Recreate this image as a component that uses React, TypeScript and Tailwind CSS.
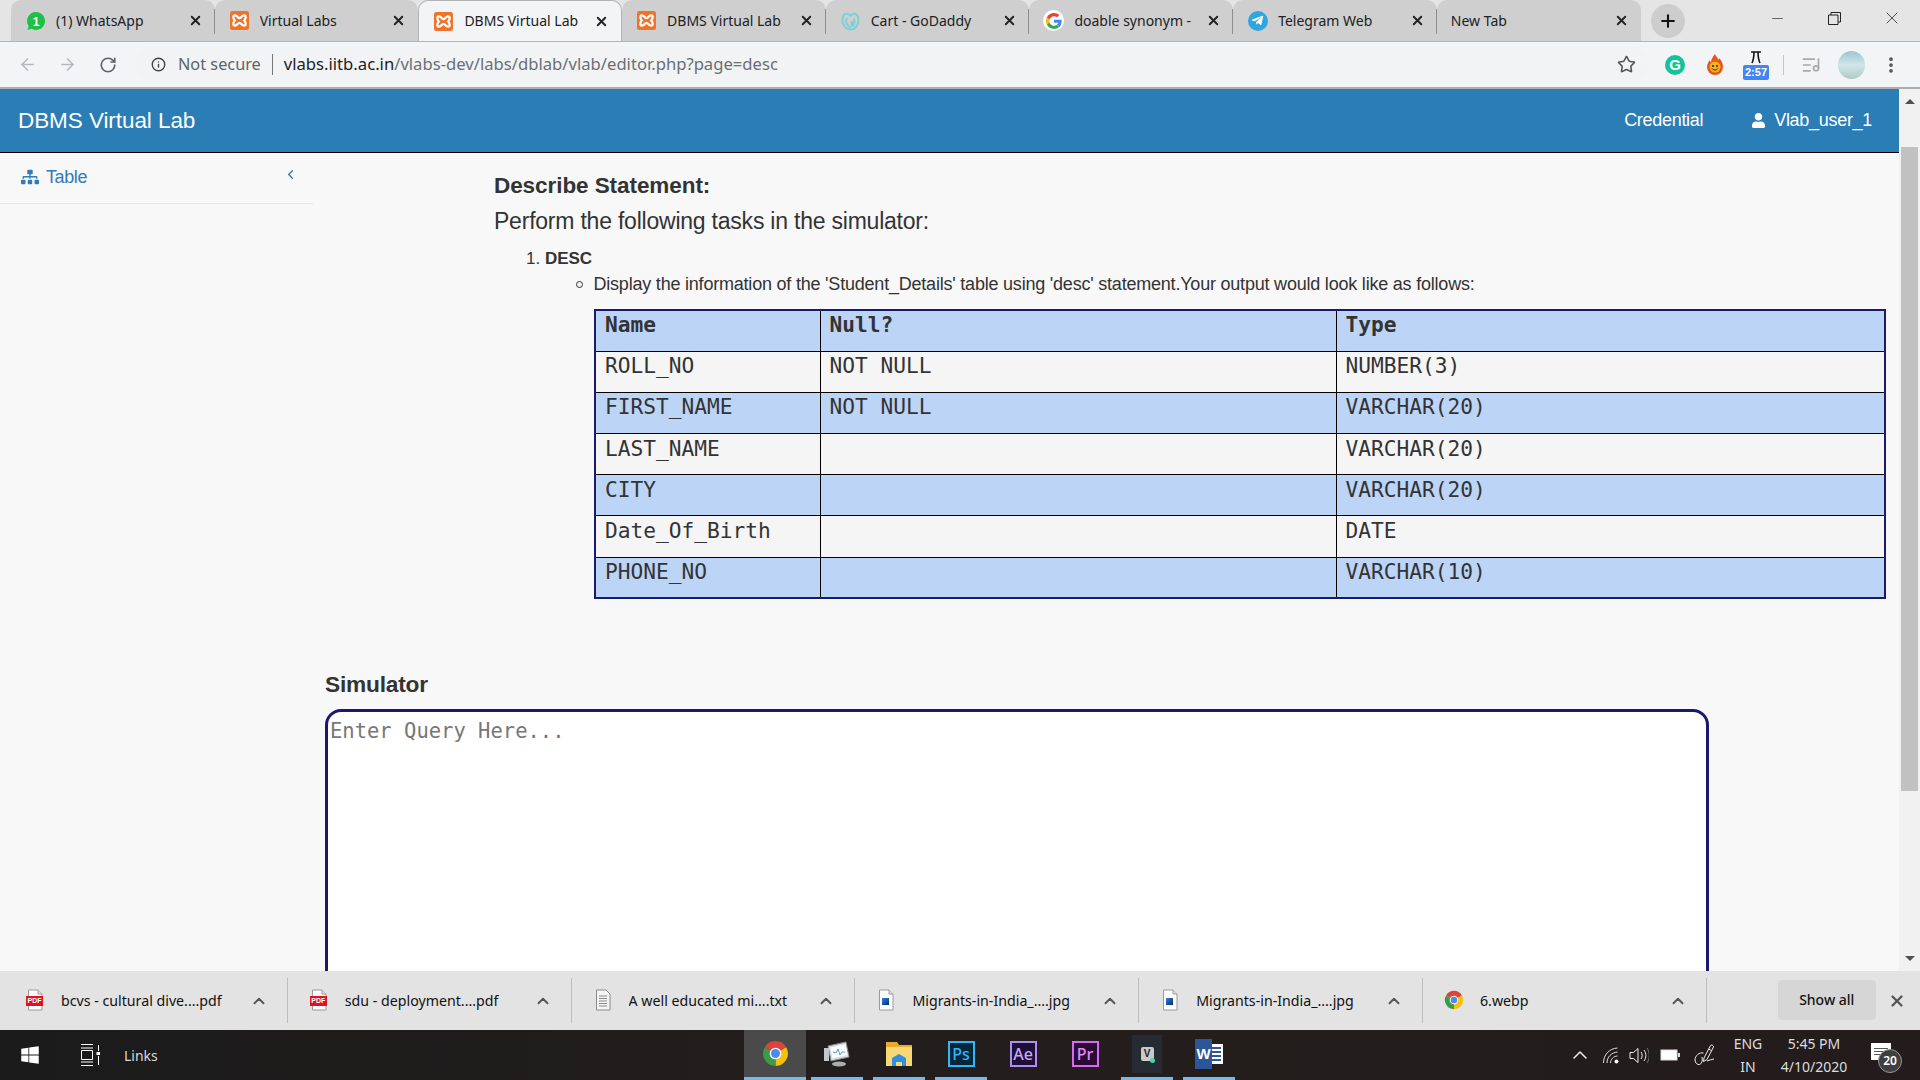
import React from "react";
import { ArrowLeft, ArrowRight, RotateCw, Star, X, Plus, ChevronUp, ChevronLeft, Minus, MoreVertical, Info, ListMusic } from "lucide-react";
import { FaSitemap, FaUser, FaTelegramPlane, FaWindows } from "react-icons/fa";

const Xampp = () => (
  <svg width="19" height="19" viewBox="0 0 20 20">
    <rect width="20" height="20" rx="2.5" fill="#f0732a" />
    <path d="M5 4.5c3 0 3 3 5 3s2-3 5-3c2 0 2 3.5 0 5.500 2 2 2 5.500 0 5.500-3 0-3-3-5-3s-2 3-5 3c-2 0-2-3.500 0-5.500-2-2-2-5.500 0-5.500z" fill="none" stroke="#fff" strokeWidth="2.400" />
  </svg>
);
const WhatsApp = () => (
  <svg width="20" height="20" viewBox="0 0 20 20">
    <path d="M10 1a9 9 0 1 1-4.500 16.800L1.500 19l1.200-3.900A9 9 0 0 1 10 1z" fill="#1fc04a" />
    <text x="10" y="14.500" textAnchor="middle" fontSize="12" fontWeight="700" fill="#fff" fontFamily="Liberation Sans, sans-serif">1</text>
  </svg>
);
const GoDaddy = () => (
  <svg width="21" height="20" viewBox="0 0 21 20" fill="none" stroke="#7fd0d6" strokeWidth="2">
    <path d="M10.500 18.500C5 18.500 2 13 2.500 7.500 3 3 7 1 10.500 4.500 14 1 18 3 18.500 7.500 19 13 16 18.500 10.500 18.500z" />
    <path d="M7 7c-2 4 0 8 3.500 9.500M14 7.500c1 3 .5 5.500-1.500 7.500-1-1-1-3 0-5" />
  </svg>
);
const GoogleG = () => (
  <span className="flex h-[21px] w-[21px] items-center justify-center rounded-full bg-white">
    <svg width="16" height="16" viewBox="0 0 48 48">
      <path fill="#EA4335" d="M24 9.5c3.54 0 6.71 1.22 9.21 3.6l6.85-6.85C35.9 2.38 30.47 0 24 0 14.62 0 6.51 5.38 2.56 13.22l7.98 6.19C12.43 13.72 17.74 9.5 24 9.5z" />
      <path fill="#4285F4" d="M46.98 24.55c0-1.57-.15-3.09-.38-4.55H24v9.02h12.94c-.58 2.96-2.26 5.48-4.78 7.18l7.73 6c4.51-4.18 7.09-10.36 7.09-17.65z" />
      <path fill="#FBBC05" d="M10.53 28.59c-.48-1.45-.76-2.99-.76-4.59s.27-3.14.76-4.59l-7.98-6.19C.92 16.46 0 20.12 0 24c0 3.88.92 7.54 2.56 10.78l7.97-6.19z" />
      <path fill="#34A853" d="M24 48c6.48 0 11.93-2.13 15.89-5.81l-7.73-6c-2.15 1.45-4.92 2.3-8.16 2.3-6.26 0-11.57-4.22-13.47-9.91l-7.98 6.19C6.51 42.62 14.62 48 24 48z" />
    </svg>
  </span>
);
const Telegram = () => (
  <span className="flex h-[20px] w-[20px] items-center justify-center rounded-full bg-[#2ea6df] text-white">
    <FaTelegramPlane size={13} />
  </span>
);
const Chrome = ({ size }: { size: number }) => (
  <svg width={size} height={size} viewBox="0 0 24 24">
    <path d="M12 12L2.470 6.500A11 11 0 0 1 21.530 6.500z" fill="#db4437" />
    <path d="M12 12L21.530 6.500A11 11 0 0 1 12 23z" fill="#f4c20d" />
    <path d="M12 12L12 23A11 11 0 0 1 2.470 6.500z" fill="#3d9a4a" />
    <circle cx="12" cy="12" r="5.200" fill="#fff" />
    <circle cx="12" cy="12" r="4" fill="#4a8af4" />
  </svg>
);
const FileBase = ({ children }: { children?: React.ReactNode }) => (
  <span className="relative block h-[22px] w-[16px]">
    <svg width="16" height="22" viewBox="0 0 16 22">
      <path d="M1.500 1h9.500l4 4v16h-13.500z" fill="#fdfdfd" stroke="#9a9a9a" />
      <path d="M11 1v4h4" fill="#e5e5e5" stroke="#9a9a9a" />
    </svg>
    {children}
  </span>
);
const PdfIcon = () => (
  <FileBase>
    <span className="absolute left-[-1px] top-[7px] flex h-[10px] w-[17px] items-center justify-center bg-[#e3101f] font-['Liberation_Sans',sans-serif] text-[7px] font-bold leading-none text-white">PDF</span>
  </FileBase>
);
const TxtIcon = () => (
  <svg width="16" height="22" viewBox="0 0 16 22">
    <path d="M1.500 1h9.500l4 4v16h-13.500z" fill="#f4f4f4" stroke="#8b8b8b" />
    <path d="M4 7h8M4 9.500h8M4 12h8M4 14.500h8M4 17h8" stroke="#8b8b8b" />
  </svg>
);
const JpgIcon = () => (
  <FileBase>
    <span className="absolute left-[4px] top-[9px] block h-[7px] w-[7px] bg-gradient-to-br from-[#2f84dc] to-[#0b2d6c]" />
  </FileBase>
);

const tabs: { title: string; icon?: React.ReactNode; active?: boolean }[] = [
  { title: "(1) WhatsApp", icon: <WhatsApp /> },
  { title: "Virtual Labs", icon: <Xampp /> },
  { title: "DBMS Virtual Lab", icon: <Xampp />, active: true },
  { title: "DBMS Virtual Lab", icon: <Xampp /> },
  { title: "Cart - GoDaddy", icon: <GoDaddy /> },
  { title: "doable synonym -", icon: <GoogleG /> },
  { title: "Telegram Web", icon: <Telegram /> },
  { title: "New Tab" },
];

function TabStrip() {
  return (
    <div className="flex h-[42px] shrink-0 border-b border-[#b4b4b4] bg-[#e5e5e5] pl-[11px] font-['Noto_Sans',sans-serif] text-[14px] text-[#202124]">
      {tabs.map((t, i) => (
        <div
          key={i}
          className={`relative flex h-[41px] w-[203.7px] shrink-0 items-center rounded-t-[10px] pl-[14px] pr-[12px] ${t.active ? "border border-b-0 border-[#b4b4b4] bg-[#f3f4f6]" : "bg-[#cfcfcf]"}`}
        >
          {t.icon && <span className="mr-[10px] flex w-[21px] shrink-0 items-center justify-center">{t.icon}</span>}
          <span className="flex-1 truncate pb-[1px]">{t.title}</span>
          <X size={15} strokeWidth={3} className="shrink-0 text-[#222]" />
          {i !== 1 && i !== 2 && i !== 7 && <span className="absolute right-0 top-[9px] h-[25px] w-px bg-[#8e8e8e]" />}
        </div>
      ))}
      <span className="ml-[10px] mt-[4px] flex h-[34px] w-[34px] shrink-0 items-center justify-center rounded-full bg-[#cdcdcd]">
        <Plus size={20} strokeWidth={2.5} className="text-[#111]" />
      </span>
      <div className="ml-auto flex h-[36px] items-center text-[#333]">
        <span className="flex w-[57px] justify-center"><Minus size={17} strokeWidth={1} /></span>
        <span className="mr-[1px] flex w-[57px] justify-center">
          <svg width="13" height="13" viewBox="0 0 13 13" fill="none" stroke="#222"><path d="M.5 3h9.500v9.500H.5zM3 3V.5h9.500V10H10" /></svg>
        </span>
        <span className="flex w-[56px] justify-center"><X size={20} strokeWidth={1} /></span>
      </div>
    </div>
  );
}

function Toolbar() {
  return (
    <div className="flex h-[47px] shrink-0 items-center border-b-[2px] border-[#adadad] bg-[#f3f4f6] font-['Noto_Sans',sans-serif]">
      <ArrowLeft size={19} className="ml-[18px] text-[#b6b8bb]" />
      <ArrowRight size={19} className="ml-[21px] text-[#b6b8bb]" />
      <RotateCw size={18} strokeWidth={2.2} className="ml-[22px] text-[#5f6368]" />
      <div className="ml-[18px] flex h-[35px] w-[1513px] items-center rounded-full bg-[#f1f3f4] pl-[16px] pr-[12px]">
        <Info size={15} strokeWidth={2.2} className="text-[#444]" />
        <span className="ml-[12px] text-[16.300px] text-[#5f6368]">Not secure</span>
        <span className="ml-[11px] h-[21px] w-px bg-[#777]" />
        <span className="ml-[11px] text-[16.650px] text-[#202124]">vlabs.iitb.ac.in<span className="text-[#6b6f74]">/vlabs-dev/labs/dblab/vlab/editor.php?page=desc</span></span>
        <Star size={19} strokeWidth={2} className="ml-auto text-[#555]" />
      </div>
      <span className="ml-[17px] flex h-[20px] w-[20px] items-center justify-center rounded-full bg-[#15c39a] font-['Liberation_Sans',sans-serif] text-[15px] font-bold leading-none text-white">G</span>
      <span className="ml-[20px] flex h-[20px] w-[20px] items-center justify-center">
        <svg width="18" height="21" viewBox="0 0 18 21">
          <path d="M9 0c1 3 3 3 3 6 1-1 1-2 1-2 3 3 4 6 4 9a8 8 0 0 1-16 0c0-3 2-6 3-7 0 1 .5 2 1 2.500C5 5 7 3 9 0z" fill="#e8541c" />
          <circle cx="9" cy="13" r="5.500" fill="#f7b21a" />
          <circle cx="7" cy="12" r="1" fill="#222" />
          <circle cx="11" cy="12" r="1" fill="#222" />
          <path d="M6 14.500c1.500 2 4.500 2 6 0" fill="none" stroke="#222" />
        </svg>
      </span>
      <span className="relative ml-[18px] block h-[30px] w-[26px]">
        <svg width="26" height="14" viewBox="0 0 26 14" fill="none" stroke="#111" strokeWidth="1.600"><path d="M8 2h10M11 2c0 5-.5 8-2 11M15 2c0 5 .5 8 2 11" /></svg>
        <span className="absolute bottom-0 left-0 flex h-[15px] w-[26px] items-center justify-center rounded-[2px] bg-[#4285f4] font-['Liberation_Sans',sans-serif] text-[11px] font-bold leading-none text-white">2:57</span>
      </span>
      <span className="ml-[14px] h-[20px] w-px bg-[#c6c6c6]" />
      <ListMusic size={20} className="ml-[17px] text-[#a9a9a9]" />
      <span className="ml-[17px] block h-[28px] w-[27px] rounded-full bg-gradient-to-b from-[#9cc6d4] via-[#d0e6ea] to-[#b0c9c6]" />
      <MoreVertical size={20} strokeWidth={2.5} className="ml-[16px] text-[#555]" />
    </div>
  );
}

const rows = [
  ["Name", "Null?", "Type"],
  ["ROLL_NO", "NOT NULL", "NUMBER(3)"],
  ["FIRST_NAME", "NOT NULL", "VARCHAR(20)"],
  ["LAST_NAME", "", "VARCHAR(20)"],
  ["CITY", "", "VARCHAR(20)"],
  ["Date_Of_Birth", "", "DATE"],
  ["PHONE_NO", "", "VARCHAR(10)"],
];

function DescTable() {
  return (
    <table className="w-[1292px] table-fixed border-collapse border-[2px] border-[#191970] font-['DejaVu_Sans_Mono',monospace] text-[21.200px] leading-[24px] text-[#333]">
      <colgroup>
        <col className="w-[225px]" />
        <col className="w-[516px]" />
        <col />
      </colgroup>
      <tbody>
        {rows.map((r, i) => (
          <tr key={i} className={`${i % 2 === 0 ? "bg-[#bcd4f6]" : "bg-[#f5f5f5]"} ${i === 0 ? "font-bold" : ""}`}>
            {r.map((c, j) => (
              <td key={j} className="h-[41.200px] border border-black px-[9px] pb-[11px] pt-0 align-middle whitespace-nowrap">{c}</td>
            ))}
          </tr>
        ))}
      </tbody>
    </table>
  );
}

function Page() {
  return (
    <div className="flex min-h-0 flex-1 overflow-hidden bg-[#f8f8f8] font-['Liberation_Sans',sans-serif]">
      <div className="min-w-0 flex-1 overflow-hidden">
        <div className="flex h-[64px] items-center border-b border-black bg-[#2a7db5] text-white">
          <span className="ml-[18px] text-[22.500px] tracking-[-0.07px]">DBMS Virtual Lab</span>
          <span className="ml-auto text-[18px] tracking-[-0.3px]">Credential</span>
          <FaUser size={15} className="ml-[48px]" />
          <span className="ml-[8px] mr-[27px] text-[18px] tracking-[-0.3px]">Vlab_user_1</span>
        </div>
        <div className="flex">
          <aside className="w-[313px] shrink-0">
            <div className="flex h-[51px] items-center border-b border-[#e7e7e7] pb-[2px] pl-[21px] pr-[15px] text-[#337ab7]">
              <FaSitemap size={18} />
              <span className="ml-[7px] text-[18px] tracking-[-0.4px]">Table</span>
              <ChevronLeft size={15} className="ml-auto mb-[6px]" />
            </div>
          </aside>
          <main className="min-w-0 flex-1 pl-[12px] text-[#333]">
            <div className="pl-[169px] pt-[17px]">
              <div className="h-[32px] text-[22.500px] font-bold leading-[32px] tracking-[-0.07px]">Describe Statement:</div>
              <div className="mt-[3px] h-[32px] text-[23px] leading-[32px] tracking-[-0.22px]">Perform the following tasks in the simulator:</div>
              <div className="ml-[32px] mt-[10px] h-[24px] text-[17px] leading-[24px]">1. <b>DESC</b></div>
              <div className="ml-[99.500px] mt-[1px] flex h-[25px] items-center whitespace-nowrap text-[18px] tracking-[-0.21px]">
                <span className="mr-[11px] ml-[-18px] block h-[7px] w-[7px] rounded-full border border-[#333]" />
                Display the information of the 'Student_Details' table using 'desc' statement.Your output would look like as follows:
              </div>
              <div className="ml-[100px] mt-[12px]"><DescTable /></div>
            </div>
            <div className="mt-[69px] h-[32px] text-[22.700px] font-bold leading-[32px] tracking-[-0.2px]">Simulator</div>
            <textarea
              readOnly
              placeholder="Enter Query Here..."
              className="mt-[9px] block h-[400px] w-[1384px] resize-none rounded-[16px] border-[3px] border-[#191970] bg-white py-[6px] pl-[2px] font-['DejaVu_Sans_Mono',monospace] text-[20.500px] leading-[26px] outline-none placeholder:text-[#777]"
            />
          </main>
        </div>
      </div>
      <div className="flex w-[21px] shrink-0 flex-col items-center bg-[#f1f1f1]">
        <span className="mt-[10px] block h-0 w-0 border-x-[5px] border-b-[5px] border-x-transparent border-b-[#505050]" />
        <span className="mt-[43px] block h-[644px] w-[17px] bg-[#c1c1c1]" />
        <span className="mb-[10px] mt-auto block h-0 w-0 border-x-[5px] border-t-[5px] border-x-transparent border-t-[#505050]" />
      </div>
    </div>
  );
}

const downloads: { name: string; icon: React.ReactNode }[] = [
  { name: "bcvs - cultural dive....pdf", icon: <PdfIcon /> },
  { name: "sdu - deployment....pdf", icon: <PdfIcon /> },
  { name: "A well educated mi....txt", icon: <TxtIcon /> },
  { name: "Migrants-in-India_....jpg", icon: <JpgIcon /> },
  { name: "Migrants-in-India_....jpg", icon: <JpgIcon /> },
  { name: "6.webp", icon: <Chrome size={20} /> },
];

function DownloadBar() {
  return (
    <div className="flex h-[59px] shrink-0 items-center bg-[#e3e3e3] pl-[4px] font-['Noto_Sans',sans-serif] text-[14.200px] text-[#111]">
      {downloads.map((d, i) => (
        <div key={i} className="flex h-[45px] w-[283.800px] shrink-0 items-center border-r border-[#bdbdbd] pl-[21px] pr-[19px]">
          <span className="mb-[2px] flex w-[20px] shrink-0 justify-center">{d.icon}</span>
          <span className="ml-[16px] flex-1 truncate">{d.name}</span>
          <ChevronUp size={18} strokeWidth={2.5} className="text-[#555]" />
        </div>
      ))}
      <span className="ml-[71px] mb-[2px] flex h-[40px] w-[98px] items-center justify-center rounded-[4px] bg-[#d6d6d6] text-[14px] font-medium">Show all</span>
      <X size={18} strokeWidth={3} className="ml-[12px] text-[#555]" />
    </div>
  );
}

function AdobeIcon({ label, border, text, bg }: { label: string; border: string; text: string; bg: string }) {
  return (
    <span
      className="flex h-[26px] w-[27px] items-center justify-center border-[2px] font-['Noto_Sans',sans-serif] text-[16px] font-medium leading-none"
      style={{ borderColor: border, color: text, backgroundColor: bg }}
    >
      {label}
    </span>
  );
}

const apps: { node: React.ReactNode; active?: boolean; open?: boolean }[] = [
  { node: <Chrome size={27} />, active: true, open: true },
  {
    node: (
      <svg width="28" height="28" viewBox="0 0 28 28">
        <path d="M5 6l18-4 3 15-18 4z" fill="#d8dde0" stroke="#888" />
        <path d="M7.500 7.500l15-3.300 2 10.800-15 3.300z" fill="#fbfdff" />
        <path d="M10 12l3 1 2-4 2 6 2-3 3 0" fill="none" stroke="#5a9fd0" />
        <ellipse cx="16" cy="24" rx="7" ry="2.500" fill="#a9adb0" />
        <rect x="1" y="8" width="5" height="13" fill="#c4c7c9" />
      </svg>
    ),
    open: true,
  },
  {
    node: (
      <svg width="28" height="26" viewBox="0 0 28 26">
        <path d="M1 1h11l2 3h13v5H1z" fill="#e8a92c" />
        <rect x="1" y="6" width="26" height="19" fill="#f8d775" />
        <path d="M7 25v-8l7-4 7 4v8h-4v-4h-6v4z" fill="#2f8fe0" />
      </svg>
    ),
    open: true,
  },
  { node: <AdobeIcon label="Ps" border="#2fb8f5" text="#2fb8f5" bg="#05263a" />, open: true },
  { node: <AdobeIcon label="Ae" border="#b18df0" text="#c9a8f8" bg="#1d1036" /> },
  { node: <AdobeIcon label="Pr" border="#d56bf0" text="#e08af8" bg="#2a0b36" /> },
  {
    node: (
      <span className="relative flex h-[38px] w-[30px] items-center justify-center bg-[#252a33]">
        <span className="flex h-[14px] w-[13px] items-center justify-center rounded-[2px] bg-[#c9c9c9] font-['Liberation_Sans',sans-serif] text-[10px] font-bold leading-none text-[#222]">V</span>
        <span className="absolute bottom-[10px] right-[7px] h-[5px] w-[5px] rounded-full bg-[#4fd3a5]" />
      </span>
    ),
    open: true,
  },
  {
    node: (
      <span className="relative block h-[32px] w-[28px]">
        <span className="absolute right-0 top-[6px] flex h-[20px] w-[14px] flex-col justify-around bg-white px-[2px] py-[2px]">
          <span className="h-[2px] bg-[#2b579a]" /><span className="h-[2px] bg-[#2b579a]" /><span className="h-[2px] bg-[#2b579a]" /><span className="h-[2px] bg-[#2b579a]" />
        </span>
        <span className="absolute left-0 top-[1px] flex h-[30px] w-[17px] items-center justify-center bg-[#2b579a] font-['Liberation_Sans',sans-serif] text-[15px] font-bold leading-none text-white">W</span>
      </span>
    ),
    open: true,
  },
];

function Taskbar() {
  return (
    <div className="flex h-[50px] shrink-0 items-center bg-gradient-to-r from-[#1b1b1b] via-[#231e1d] to-[#231b1c] font-['Noto_Sans',sans-serif] text-white">
      <FaWindows size={20} className="ml-[20px]" />
      <svg width="20" height="22" viewBox="0 0 20 22" className="ml-[40px]" fill="none" stroke="#fff">
        <path d="M1 .5h12M1 21.500h12M1 4h12M1 18h12M1.500 6.500h11v9h-11zM18.500 1v6M18.500 12v9" />
        <rect x="16.500" y="8" width="4" height="3" fill="#fff" stroke="none" />
      </svg>
      <span className="ml-[24px] w-[32px] text-[14px] text-[#d8d8d8]">Links</span>
      <div className="ml-[588px] flex h-full">
        {apps.map((a, i) => (
          <div key={i} className="flex h-full w-[62px] items-center justify-center">
            <div className={`flex h-full w-full flex-col items-center ${a.active ? "bg-[#4a4a4a]" : ""} ${a.open && !a.active ? "px-[5px]" : ""}`}>
              <div className="flex min-h-0 flex-1 items-center justify-center">{a.node}</div>
              <span className={`block h-[3px] w-full ${a.open ? "bg-[#76b9ed]" : ""}`} />
            </div>
          </div>
        ))}
      </div>
      <ChevronUp size={24} strokeWidth={1.5} className="ml-[328px] text-[#eee]" />
      <svg width="18" height="17" viewBox="0 0 18 17" fill="none" stroke="#ddd" className="ml-[10px]">
        <path d="M1.500 16C1.500 8 7 1.500 15.500 1M5 16C5 10.500 9 5.500 15.500 5M8.500 16c0-3.500 3-7 7-7" />
        <circle cx="14.500" cy="14.500" r="2" fill="#fff" stroke="none" />
      </svg>
      <svg width="20" height="17" viewBox="0 0 20 17" fill="none" stroke="#eee" className="ml-[9px]">
        <path d="M1 5.500h3.500L9 1.500v14l-4.500-4H1zM12 5c1.500 2 1.500 5 0 7M15 3c2.500 3.500 2.500 7.500 0 11" />
        <path d="M18 1c3 4.500 3 10.500 0 15" stroke="#777" />
      </svg>
      <svg width="20" height="12" viewBox="0 0 20 12" className="ml-[11px]">
        <rect x="1" y="1" width="16" height="10" fill="#fff" stroke="#ddd" />
        <rect x="18" y="4" width="2" height="4" fill="#ddd" />
      </svg>
      <svg width="21" height="22" viewBox="0 0 21 22" fill="none" stroke="#eee" className="ml-[14px]">
        <path d="M10 14L16.500 1.500c1-1 3.500 0 3 1.500L13 15.500l-3.500 2zM14.500 5l3 1.500" />
        <path d="M9.500 9C5 8 1 12 1 16c0 3 2.500 5 4.500 4.500S9 17 8 13M13 17c2-1 5-1.500 7-2" />
      </svg>
      <div className="ml-[15px] flex w-[36px] flex-col items-center text-[14px] leading-[23px] text-[#ddd]">
        <span>ENG</span>
        <span>IN</span>
      </div>
      <div className="ml-[12px] flex w-[72px] flex-col items-center text-[14px] leading-[23px] text-[#ddd]">
        <span>5:45 PM</span>
        <span>4/10/2020</span>
      </div>
      <div className="relative ml-[21px] h-[24px] w-[20px] self-center">
        <span className="flex h-[17px] w-[20px] flex-col justify-center gap-[2px] bg-white px-[3px]">
          <span className="h-px bg-[#555]" /><span className="h-px bg-[#555]" /><span className="h-px bg-[#555]" />
        </span>
        <span className="absolute left-[7px] top-[6px] flex h-[24px] w-[24px] items-center justify-center rounded-full border border-[#999] bg-[#3f3f3f] text-[12px] font-semibold leading-none">20</span>
      </div>
    </div>
  );
}

export default function App() {
  return (
    <div className="flex h-screen w-[1920px] flex-col overflow-hidden">
      <TabStrip />
      <Toolbar />
      <Page />
      <DownloadBar />
      <Taskbar />
    </div>
  );
}
